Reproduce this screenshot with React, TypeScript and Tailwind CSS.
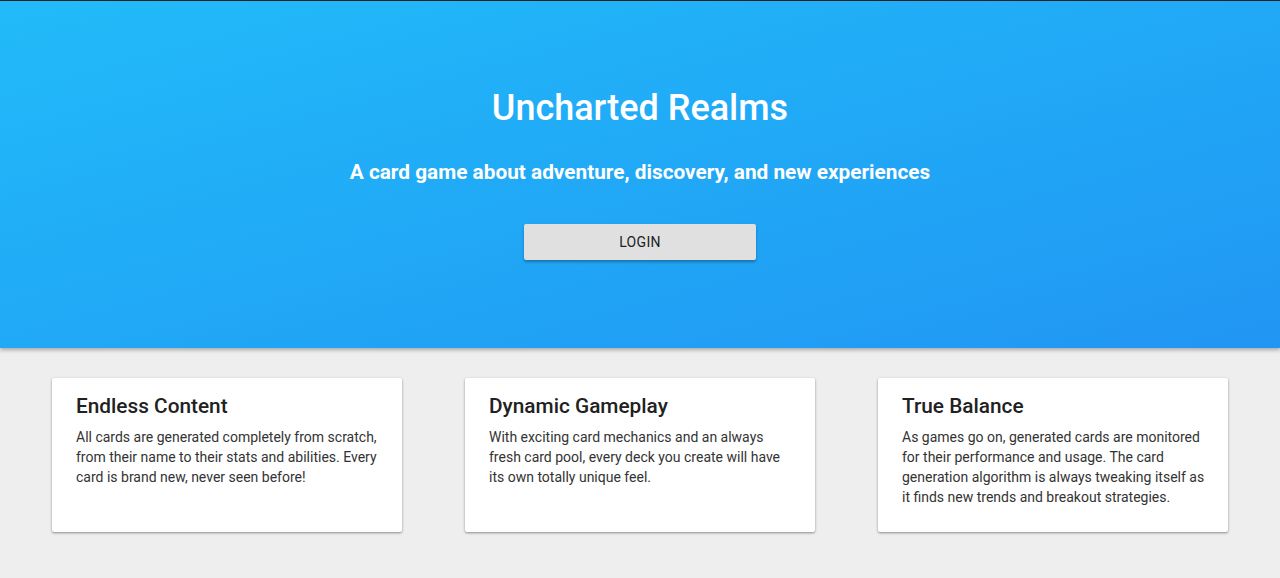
import React from "react";

const cards = [
  {
    title: "Endless Content",
    text: "All cards are generated completely from scratch, from their name to their stats and abilities. Every card is brand new, never seen before!",
  },
  {
    title: "Dynamic Gameplay",
    text: "With exciting card mechanics and an always fresh card pool, every deck you create will have its own totally unique feel.",
  },
  {
    title: "True Balance",
    text: "As games go on, generated cards are monitored for their performance and usage. The card generation algorithm is always tweaking itself as it finds new trends and breakout strategies.",
  },
];

export default function App() {
  return (
    <div
      className="min-h-[578px] bg-[#eeeeee] border-t border-[#222222]"
      style={{ fontFamily: "Roboto, 'Noto Sans', sans-serif" }}
    >
      <header className="relative z-10 flex flex-col items-center bg-gradient-to-br from-[#22bbf9] to-[#2196f3] pt-[86px] pb-[88px] text-white shadow-[0_2px_4px_rgba(0,0,0,0.3)]">
        <h1 className="text-[36px] leading-[42px] font-medium">Uncharted Realms</h1>
        <h2 className="mt-[29px] text-[20.8px] leading-[28px] font-bold">
          A card game about adventure, discovery, and new experiences
        </h2>
        <button className="mt-[38px] h-[36px] w-[232px] rounded-[2px] bg-[#e0e0e0] text-[14px] font-normal tracking-[0.3px] text-[#212121] shadow-[0_2px_3px_rgba(0,0,0,0.3)]">
          LOGIN
        </button>
      </header>
      <main className="flex justify-center gap-[63px] pt-[30px]">
        {cards.map((c) => (
          <div
            key={c.title}
            className="h-[154px] w-[350px] rounded-[2px] bg-white pl-[24px] pr-[21px] pt-[14px] shadow-[0_1px_3px_rgba(0,0,0,0.25),0_1px_2px_rgba(0,0,0,0.2)]"
          >
            <h3 className="text-[20.8px] leading-[28px] font-medium text-[#212121]">{c.title}</h3>
            <p className="mt-[7px] text-[14px] leading-[20px] text-[#333333]">{c.text}</p>
          </div>
        ))}
      </main>
    </div>
  );
}
